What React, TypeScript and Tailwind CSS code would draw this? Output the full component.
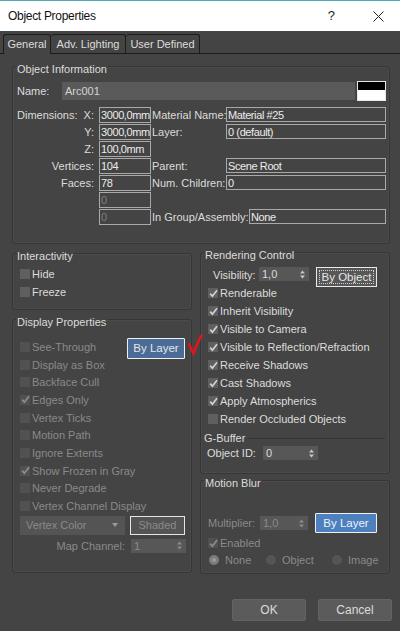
import React from "react";

const FONT = "font-['Liberation_Sans',Arial,sans-serif]";

function Check({ on, dim }: { on?: boolean; dim?: boolean }) {
  return (
    <span
      className={`flex h-[10px] w-[10px] shrink-0 items-center justify-center ${
        dim ? "bg-[#515151]" : "bg-[#5f5f5f]"
      }`}
    >
      {on && (
        <svg width="9" height="9" viewBox="0 0 9 9">
          <path
            d="M1.2 4.6 L3.4 7.2 L8 1.2"
            fill="none"
            stroke={dim ? "#8e8e8e" : "#d2d2d2"}
            strokeWidth="1.7"
          />
        </svg>
      )}
    </span>
  );
}

function CheckRow({
  label,
  on,
  dim,
  tall,
  children,
}: {
  label: string;
  on?: boolean;
  dim?: boolean;
  tall?: boolean;
  children?: React.ReactNode;
}) {
  return (
    <div
      className={`flex items-center gap-[2px] pl-[7px] ${tall ? "h-[17.7px]" : "h-[18px]"} ${
        dim ? "text-[#8a8a8a]" : "text-[#dcdcdc]"
      }`}
    >
      <Check on={on} dim={dim} />
      <span className="whitespace-nowrap">{label}</span>
      {children}
    </div>
  );
}

function Spin({
  value,
  w,
  dim,
}: {
  value: string;
  w: string;
  dim?: boolean;
}) {
  return (
    <div
      className={`flex h-[14px] items-center justify-between bg-[#575757] pl-[3px] pr-[4px] ${w} ${
        dim ? "text-[#8a8a8a]" : "text-[#dcdcdc]"
      }`}
    >
      <span>{value}</span>
      <svg width="5" height="9" viewBox="0 0 5 9">
        <path
          d="M0 3.6 L2.5 0.6 L5 3.6Z M0 5.4 L2.5 8.4 L5 5.4Z"
          fill={dim ? "#8a8a8a" : "#c8c8c8"}
        />
      </svg>
    </div>
  );
}

function Field({
  value,
  w,
  h,
  dim,
}: {
  value: string;
  w: string;
  h: string;
  dim?: boolean;
}) {
  return (
    <div
      className={`flex items-center overflow-hidden whitespace-nowrap border border-[#a9a9a9] pl-[1px] tracking-[-0.4px] ${w} ${h} ${
        dim ? "text-[#7c7c7c]" : "text-[#ececec]"
      }`}
    >
      {value}
    </div>
  );
}

function Group({
  title,
  cls,
  children,
}: {
  title: string;
  cls: string;
  children?: React.ReactNode;
}) {
  return (
    <div
      className={`flex flex-col rounded-[3px] border border-[#363636] shadow-[inset_0_0_0_1px_#4b4b4b] ${cls}`}
    >
      <div className="-mt-[5px] ml-[3px] h-[14px] w-fit bg-[#444444] px-[1px] leading-[14px] text-[#dcdcdc]">
        {title}
      </div>
      {children}
    </div>
  );
}

function Radio({ on, label, w }: { on?: boolean; label: string; w: string }) {
  return (
    <div className={`flex items-center gap-[6px] ${w}`}>
      <span
        className={`flex h-[10px] w-[10px] items-center justify-center rounded-full ${
          on ? "bg-[#7c7c7c]" : "bg-[#555555]"
        }`}
      >
        {on && <span className="h-[4px] w-[4px] rounded-full bg-[#9a9a9a]" />}
      </span>
      <span className="text-[#8a8a8a]">{label}</span>
    </div>
  );
}

export default function App() {
  return (
    <div
      className={`relative flex h-[631px] w-[400px] flex-col overflow-hidden bg-[#444444] text-[11px] leading-[14px] text-[#dcdcdc] ${FONT}`}
    >
      {/* Title bar */}
      <div className="flex h-[31px] shrink-0 items-center border-t border-[#4fa9b7] bg-white text-[#111]">
        <span className="ml-[8px] text-[12px] tracking-[-0.3px]">Object Properties</span>
        <span className="ml-auto mr-[38px] text-[13px] text-[#222]">?</span>
        <svg width="11" height="11" viewBox="0 0 11 11" className="mr-[16px]">
          <path d="M0.5 0.5 L10.5 10.5 M10.5 0.5 L0.5 10.5" stroke="#222" strokeWidth="1" />
        </svg>
      </div>

      {/* Tabs */}
      <div className="mt-[3px] flex h-[20px] shrink-0 border-b border-[#1c1c1c] pl-[3px]">
        <div className="relative z-10 flex h-[20px] w-[48px] items-center justify-center rounded-t-[3px] border-l border-r border-t border-[#1c1c1c] bg-[#444444] pb-[1px]">
          General
        </div>
        <div className="flex h-[19px] w-[75px] items-center justify-center rounded-t-[3px] border-r border-t border-[#1c1c1c]">
          Adv. Lighting
        </div>
        <div className="flex h-[19px] w-[74px] items-center justify-center rounded-t-[3px] border-r border-t border-[#1c1c1c]">
          User Defined
        </div>
      </div>

      {/* Object Information */}
      <Group title="Object Information" cls="ml-[12px] mt-[12px] h-[178px] w-[378px] shrink-0">
        <div className="pl-[4px]">
          <div className="mt-[6px] flex h-[18px] items-center">
            <span className="w-[45px]">Name:</span>
            <div className="flex h-[18px] w-[293px] items-center bg-[#5a5a5a] pl-[3px] text-[#d4d4d4]">
              Arc001
            </div>
            <div className="ml-[2px] flex h-[20px] w-[29px] flex-col border border-[#e8e8e8]">
              <div className="h-[8px] bg-black" />
              <div className="flex-1 bg-white" />
            </div>
          </div>

          <div className="mt-[7px] flex flex-col gap-[1px]">
            <div className="flex h-[16px] items-start">
              <div className="flex h-[16px] w-[78px] items-center justify-between pr-[1px]">
                <span>Dimensions:</span>
                <span>X:</span>
              </div>
              <Field value="3000,0mm" w="ml-[4px] w-[52px]" h="h-[16px]" />
              <span className="ml-[1px] flex h-[15px] w-[74px] items-center whitespace-nowrap">Material Name:</span>
              <Field value="Material #25" w="w-[160px]" h="h-[15px]" />
            </div>
            <div className="flex h-[16px] items-start">
              <div className="flex h-[16px] w-[78px] items-center justify-end pr-[1px]">Y:</div>
              <Field value="3000,0mm" w="ml-[4px] w-[52px]" h="h-[16px]" />
              <span className="ml-[1px] flex h-[15px] w-[74px] items-center">Layer:</span>
              <Field value="0 (default)" w="w-[160px]" h="h-[15px]" />
            </div>
            <div className="flex h-[16px] items-start">
              <div className="flex h-[16px] w-[78px] items-center justify-end pr-[1px]">Z:</div>
              <Field value="100,0mm" w="ml-[4px] w-[52px]" h="h-[16px]" />
            </div>
            <div className="flex h-[16px] items-start">
              <div className="flex h-[16px] w-[78px] items-center justify-end pr-[1px]">Vertices:</div>
              <Field value="104" w="ml-[4px] w-[52px]" h="h-[16px]" />
              <span className="ml-[1px] flex h-[15px] w-[74px] items-center">Parent:</span>
              <Field value="Scene Root" w="w-[160px]" h="h-[15px]" />
            </div>
            <div className="flex h-[16px] items-start">
              <div className="flex h-[16px] w-[78px] items-center justify-end pr-[1px]">Faces:</div>
              <Field value="78" w="ml-[4px] w-[52px]" h="h-[16px]" />
              <span className="ml-[1px] flex h-[15px] w-[74px] items-center whitespace-nowrap">Num. Children:</span>
              <Field value="0" w="w-[160px]" h="h-[15px]" />
            </div>
            <div className="flex h-[16px] items-start">
              <div className="w-[78px]" />
              <Field value="0" w="ml-[4px] w-[52px]" h="h-[16px]" dim />
            </div>
            <div className="flex h-[16px] items-start">
              <div className="w-[78px]" />
              <Field value="0" w="ml-[4px] w-[52px]" h="h-[16px]" dim />
              <span className="ml-[1px] flex h-[15px] w-[97px] items-center whitespace-nowrap">In Group/Assembly:</span>
              <Field value="None" w="w-[137px]" h="h-[15px]" />
            </div>
          </div>
        </div>
      </Group>

      {/* Two columns */}
      <div className="mt-[8px] flex shrink-0 items-start">
        {/* Left column */}
        <div className="ml-[12px] flex w-[180px] flex-col pt-[1px]">
          <Group title="Interactivity" cls="h-[57px]">
            <div className="mt-[2px]">
              <CheckRow label="Hide" />
              <CheckRow label="Freeze" />
            </div>
          </Group>

          <Group title="Display Properties" cls="mt-[9px] h-[254px]">
            <div className="mt-[9px]">
              <CheckRow label="See-Through" dim tall>
                <button className="ml-auto mr-[6px] mt-[3px] flex h-[21px] w-[58px] shrink-0 items-center justify-center rounded-[1px] border border-[#f0f0f0] bg-[#4a6c96] text-[11.5px] text-[#e6e6e6]">
                  By Layer
                </button>
              </CheckRow>
              <CheckRow label="Display as Box" dim tall />
              <CheckRow label="Backface Cull" dim tall />
              <CheckRow label="Edges Only" dim on tall />
              <CheckRow label="Vertex Ticks" dim tall />
              <CheckRow label="Motion Path" dim tall />
              <CheckRow label="Ignore Extents" dim tall />
              <CheckRow label="Show Frozen in Gray" dim on tall />
              <CheckRow label="Never Degrade" dim tall />
              <CheckRow label="Vertex Channel Display" dim tall />
            </div>
            <div className="mt-[1px] flex pl-[7px]">
              <div className="flex h-[19px] w-[105px] items-center justify-between bg-[#545454] pl-[6px] pr-[7px] text-[#8a8a8a]">
                <span>Vertex Color</span>
                <svg width="6" height="4" viewBox="0 0 6 4">
                  <path d="M0 0 L6 0 L3 4Z" fill="#9a9a9a" />
                </svg>
              </div>
              <div className="ml-[5px] flex h-[19px] w-[55px] items-center justify-center border border-[#e6e6e6] bg-[#545454] text-[#8a8a8a]">
                Shaded
              </div>
            </div>
            <div className="mt-[4px] flex h-[14px] items-center pl-[7px]">
              <span className="w-[105px] text-right text-[#8a8a8a]">Map Channel:</span>
              <Spin value="1" w="ml-[6px] w-[55px]" dim />
            </div>
          </Group>
        </div>

        {/* Right column */}
        <div className="ml-[8px] flex w-[190px] flex-col">
          <Group title="Rendering Control" cls="h-[222px]">
            <div className="mt-[5px] flex items-start">
              <span className="ml-[12px] mt-[1px] h-[14px] w-[46px]">Visibility:</span>
              <div className="mt-[0px]">
                <Spin value="1,0" w="w-[50px]" />
              </div>
              <button className="ml-[7px] flex h-[20px] w-[61px] items-center justify-center border border-[#e8e8e8] bg-[#575757] text-[11.5px] text-[#e6e6e6] outline-1 outline-offset-[-4px] outline-dotted outline-[#cfcfcf]">
                By Object
              </button>
            </div>
            <div className="-mt-[3px]">
              <CheckRow label="Renderable" on />
              <CheckRow label="Inherit Visibility" on />
              <CheckRow label="Visible to Camera" on />
              <CheckRow label="Visible to Reflection/Refraction" on />
              <CheckRow label="Receive Shadows" on />
              <CheckRow label="Cast Shadows" on />
              <CheckRow label="Apply Atmospherics" on />
              <CheckRow label="Render Occluded Objects" />
            </div>
            <div className="mt-[3px] flex h-[14px] items-center">
              <span className="ml-[3px]">G-Buffer</span>
              <div className="ml-[2px] mr-[4px] mt-[1px] h-px flex-1 bg-[#363636]" />
            </div>
            <div className="mt-[1px] flex h-[14px] items-center">
              <span className="ml-[6px] w-[56px]">Object ID:</span>
              <Spin value="0" w="w-[55px]" />
            </div>
          </Group>

          <Group title="Motion Blur" cls="mt-[6px] h-[94px]">
            <div className="mt-[23px] flex h-[20px] items-center">
              <span className="ml-[7px] w-[52px] text-[#8a8a8a]">Multiplier:</span>
              <Spin value="1,0" w="w-[48px]" dim />
              <button className="ml-[7px] flex h-[20px] w-[62px] items-center justify-center rounded-[1px] border border-[#f0f0f0] bg-[#4d80bf] text-[11.5px] text-[#eef2f8]">
                By Layer
              </button>
            </div>
            <div className="mt-[1px]">
              <CheckRow label="Enabled" on dim />
            </div>
            <div className="flex h-[16px] items-center pl-[8px]">
              <Radio on label="None" w="w-[57px]" />
              <Radio label="Object" w="w-[66px]" />
              <Radio label="Image" w="w-[56px]" />
            </div>
          </Group>
        </div>
      </div>

      {/* Bottom buttons */}
      <div className="mt-[25px] flex shrink-0 justify-end gap-[12px] pr-[8px]">
        <button className="flex h-[22px] w-[74px] items-center justify-center rounded-[2px] border border-[#636363] bg-[#5b5b5b] text-[12px] text-[#dcdcdc]">
          OK
        </button>
        <button className="flex h-[22px] w-[74px] items-center justify-center rounded-[2px] border border-[#636363] bg-[#5b5b5b] text-[12px] text-[#dcdcdc]">
          Cancel
        </button>
      </div>

      {/* Red hand-drawn annotation mark */}
      <svg
        className="absolute left-[186px] top-[333px]"
        width="18"
        height="24"
        viewBox="0 0 18 24"
      >
        <path
          d="M3 11 C4.5 14 6 17.5 7.5 20.5 C9.5 15 12 8 15.5 2.5"
          fill="none"
          stroke="#e5141b"
          strokeWidth="2.4"
          strokeLinecap="round"
        />
      </svg>
    </div>
  );
}
